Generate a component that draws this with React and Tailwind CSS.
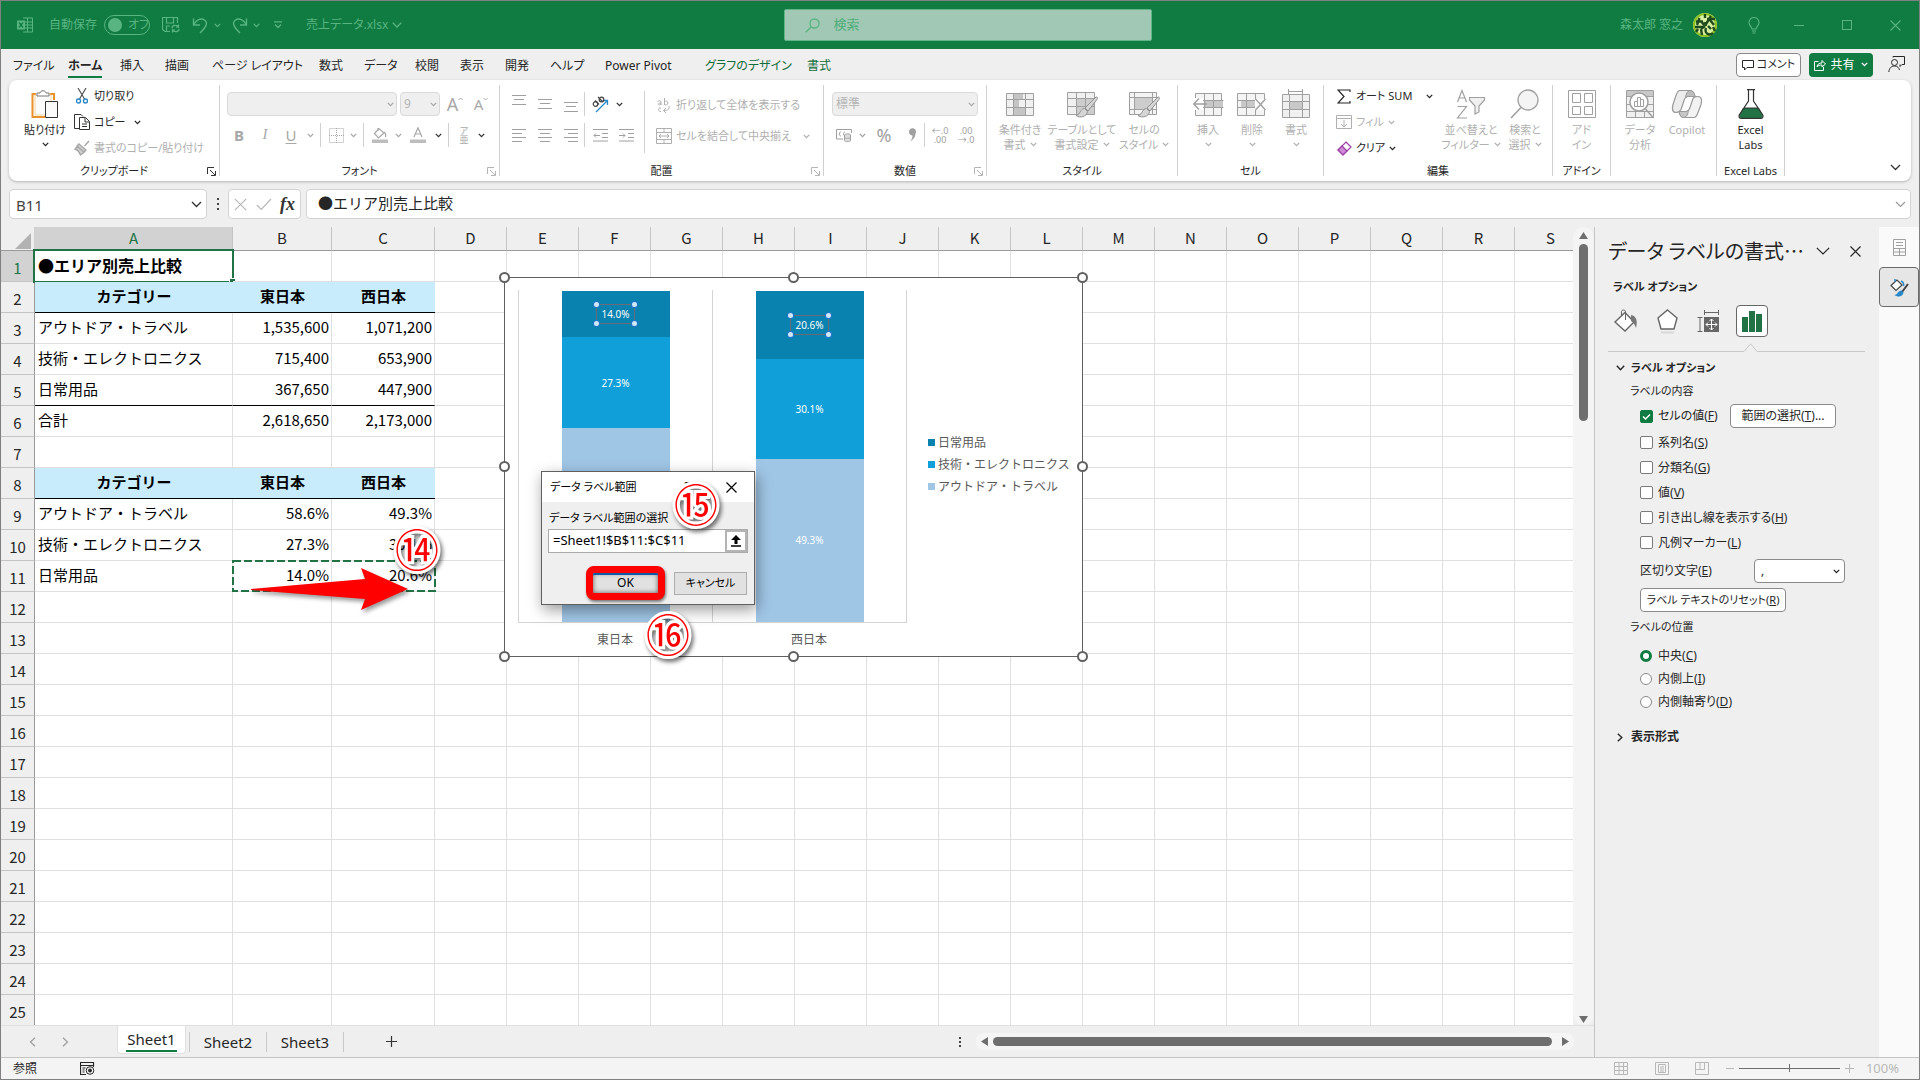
import React, { useState } from "react";
import clsx from "clsx";

const tabs = [
  { name: "ファイル", width: "w-[55px]" },
  { name: "ホーム", width: "w-[52px]", active: true },
  { name: "挿入", width: "w-[45px]" },
  { name: "描画", width: "w-[47px]" },
  { name: "ページ レイアウト", width: "w-[107px]" },
  { name: "数式", width: "w-[45px]" },
  { name: "データ", width: "w-[51px]" },
  { name: "校閲", width: "w-[45px]" },
  { name: "表示", width: "w-[45px]" },
  { name: "開発", width: "w-[45px]" },
  { name: "ヘルプ", width: "w-[55px]" },
  { name: "Power Pivot", width: "w-[100px]" },
  { name: "グラフのデザイン", width: "w-[102px]", green: true },
  { name: "書式", width: "w-[45px]", green: true },
];

const columns = "ABCDEFGHIJKLMNOPQRS".split("");

const cells = {
  1: ["●エリア別売上比較"],
  2: ["カテゴリー", "東日本", "西日本"],
  3: ["アウトドア・トラベル", "1,535,600", "1,071,200"],
  4: ["技術・エレクトロニクス", "715,400", "653,900"],
  5: ["日常用品", "367,650", "447,900"],
  6: ["合計", "2,618,650", "2,173,000"],
  8: ["カテゴリー", "東日本", "西日本"],
  9: ["アウトドア・トラベル", "58.6%", "49.3%"],
  10: ["技術・エレクトロニクス", "27.3%", "30.1%"],
  11: ["日常用品", "14.0%", "20.6%"],
};

const series = [
  { name: "日常用品", color: "#0a82b0" },
  { name: "技術・エレクトロニクス", color: "#109fd9" },
  { name: "アウトドア・トラベル", color: "#a0c6e6" },
];

const bars = [
  { label: "東日本", values: [14.0, 27.3, 58.6] },
  { label: "西日本", values: [20.6, 30.1, 49.3] },
];

/* ---------- small building blocks ---------- */

function Svg({ w = 16, h = w, box, className, children }) {
  return (
    <svg
      width={w}
      height={h}
      viewBox={box || `0 0 ${w} ${h}`}
      fill="none"
      stroke="currentColor"
      aria-hidden="true"
      className={clsx("shrink-0", className)}
    >
      {children}
    </svg>
  );
}

function Caret({ className }) {
  return (
    <Svg w={7} h={5} className={className}>
      <path d="M.8 .9l2.7 2.7L6.200 .9" strokeWidth="1.3" />
    </Svg>
  );
}

function CaretButton({ label, className }) {
  return (
    <button aria-label={label} className={clsx("flex h-6 w-3 items-center justify-center", className)}>
      <Caret />
    </button>
  );
}

function Slot({ label, width = "w-[26px]", className, children }) {
  return (
    <button aria-label={label} className={clsx("flex h-6 items-center justify-center", width, className)}>
      {children}
    </button>
  );
}

function Sep({ className = "mx-1" }) {
  return <span className={clsx("h-6 w-px bg-[#d0d0d0]", className)} />;
}

function Combo({ label, value, className }) {
  return (
    <span className={clsx("relative flex", className)}>
      <select
        aria-label={label}
        disabled
        className="h-6 w-full appearance-none rounded border border-[#dadada] bg-[#efefef] px-[3px] text-xs text-[#b4b4b4]"
      >
        <option>{value}</option>
      </select>
      <Caret className="pointer-events-none absolute top-[10px] right-[3px] text-[#a8a8a8]" />
    </span>
  );
}

function Group({ name, width, launcher, dim, children }) {
  return (
    <section className={clsx("flex shrink-0", width)}>
      <div className="flex min-w-0 flex-1 flex-col">
        <div className="h-[81px]">{children}</div>
        <div className="relative flex h-5 items-center justify-center text-[11px] whitespace-nowrap text-[#262626]">
          {name}
          {launcher && (
            <button
              aria-label={`${name}の設定`}
              className={clsx("absolute right-[3px] bottom-[5px]", dim ? "text-[#b4b4b4]" : "text-[#333]")}
            >
              <Svg w={9}>
                <path d="M.5 7V.5H7M3 3l5 5M8.500 4v4.500H4" />
              </Svg>
            </button>
          )}
        </div>
      </div>
      <span className="my-[5px] w-px bg-[#d0d0d0]" />
    </section>
  );
}

function BigButton({ icon, lines, width, caret, dark }) {
  return (
    <button
      className={clsx(
        "flex flex-col items-center self-start pt-[9px] text-[11px] whitespace-nowrap",
        width,
        dark ? "text-[#262626]" : "text-[#b0b0b0]"
      )}
    >
      <span className="mb-[3px] flex h-[30px] items-center">{icon}</span>
      {lines.map((line, i) => (
        <span key={line} className="flex h-[15px] items-center gap-1 leading-[15px]">
          {line}
          {caret && lines.length === 2 && i === 1 && <Caret />}
        </span>
      ))}
      {caret && lines.length === 1 && (
        <span className="flex h-[15px] items-center">
          <Caret />
        </span>
      )}
    </button>
  );
}

function ListButton({ icon, text, caret, dim }) {
  return (
    <button
      className={clsx(
        "flex h-[26px] items-center gap-1 text-[11px] whitespace-nowrap",
        dim ? "text-[#b0b0b0]" : "text-[#262626]"
      )}
    >
      <span className="flex w-4 justify-center">{icon}</span>
      {text}
      {caret && <Caret className={caret} />}
    </button>
  );
}

/* ---------- ribbon icons ---------- */

const PasteIcon = () => (
  <Svg w={28} h={30}>
    <path d="M5 5H1.500v23H14M19 5h4v6" stroke="#e8912d" strokeWidth="2" />
    <path d="M4 6h16v20H4z" fill="#fbfbfb" stroke="#f6d59b" />
    <path d="M6 7V4h3c.5-3 5.500-3 6 0h3v3z" fill="#fff" stroke="#777" />
    <path d="M14.500 12.500h12v16h-12z" fill="#fafafa" stroke="#333" />
  </Svg>
);

const CutIcon = () => (
  <Svg w={12} h={16}>
    <path d="M2 0l6.500 11M10 0L3.500 11" stroke="#555" strokeWidth="1.200" />
    <circle cx="2.500" cy="13" r="2" stroke="#2b88c8" strokeWidth="1.400" />
    <circle cx="9.500" cy="13" r="2" stroke="#2b88c8" strokeWidth="1.400" />
  </Svg>
);

const CopyIcon = () => (
  <Svg w={16}>
    <path d="M5 14.500H.5v-14H7l2 2M5.500 3.500h6l4 4v8h-10zM11 4v4h4M8 10h5M8 12.500h5" stroke="#333" />
  </Svg>
);

const BrushIcon = () => (
  <Svg w={16}>
    <path d="M15 1l-4.500 5M5 4l7 6-2 2-7-6zM3.500 6L1 9c2 .5 4 2.500 5.500 6l4-3" fill="#cfcfcf" stroke="#a6a6a6" strokeWidth="1.300" />
  </Svg>
);

const LinesIcon = ({ rows }) => (
  <Svg w={14}>
    {rows.map(([x1, x2], i) => (
      <path key={i} d={`M${x1} ${1.5 + i * 4}H${x2}`} />
    ))}
  </Svg>
);

const VAlignIcon = ({ top }) => (
  <Svg w={14} h={24}>
    <path d={`M0 ${top + 0.5}h14M2 ${top + 4.5}h10M0 ${top + 9.5}h14`} />
  </Svg>
);

const IndentIcon = ({ flip }) => (
  <Svg w={15} h={14}>
    <path d="M0 1.500h15M9 5.500h6M9 9.500h6M0 13h15" />
    {flip ? <path d="M0 7.500h6M4 5.500l2 2-2 2" /> : <path d="M7 7.500H1M3 5.500l-2 2 2 2" />}
  </Svg>
);

const GridIcon = ({ children }) => (
  <Svg w={28} h={26} className="text-[#a0a0a0]">
    <path d="M.5 2.500h27v22H.5z" fill="#f0f0f0" />
    {children}
    <path d="M.5 8.500h27M.5 16.500h27M7.500 2.500v22M19.500 2.500v22" />
  </Svg>
);

const Paintbrush = () => (
  <path
    d="M29 7L18 18l3 3L30 9.500c1-1.500 0-3-1-2.500zM17.500 18.500c-4 0-4 6-8.500 7 4 3 11 1 11.500-4z"
    fill="#d6d6d6"
    stroke="#909090"
  />
);

const CondIcon = () => (
  <GridIcon>
    <path d="M8 3h9v5H8zM8 9h5v7H8zM8 17h11v7H8z" fill="#c4c4c4" stroke="none" />
  </GridIcon>
);

const TableStyleIcon = () => (
  <Svg w={31} h={29} className="text-[#a0a0a0]">
    <path d="M.5 2.500h27v22H.5z" fill="#f0f0f0" />
    <path d="M9 9h18v15H9z" fill="#cdcdcd" stroke="none" />
    <path d="M.5 8.500h27M.5 16.500h27M9.500 2.500v22M18.500 2.500v22" />
    <Paintbrush />
  </Svg>
);

const CellStyleIcon = () => (
  <Svg w={31} h={29} className="text-[#a0a0a0]">
    <path d="M.5 2.500h27v22H.5z" fill="#f4f4f4" />
    <path d="M5 8h18v11H5z" fill="#cdcdcd" stroke="none" />
    <path d="M.5 7.500h27M.5 19.500h27M5.500 2.500v22M23.500 2.500v22" />
    <Paintbrush />
  </Svg>
);

const InsertIcon = () => (
  <Svg w={31} h={26} className="text-[#a0a0a0]">
    <path d="M2.500 2.500h26v22h-26z" fill="#f4f4f4" />
    <path d="M11 9h19v8H11z" fill="#c8c8c8" stroke="none" />
    <path d="M2.500 9.500h28M2.500 16.500h28M11.500 2.500v22M20.500 2.500v22" />
    <path d="M0 7h10v12H0z" fill="#fff" stroke="none" />
    <path d="M14 13H1M6 7.500L.8 13 6 18.500" strokeWidth="1.400" />
  </Svg>
);

const DeleteIcon = () => (
  <Svg w={30} h={26} className="text-[#a0a0a0]">
    <path d="M.5 2.500h27v22H.5z" fill="#f4f4f4" />
    <path d="M4 9h14v8H4z" fill="#c8c8c8" stroke="none" />
    <path d="M.5 9.500h27M.5 16.500h27M9.500 2.500v22M18.500 2.500v22" />
    <path d="M18 8h12v11H18z" fill="#fff" stroke="none" />
    <path d="M18.500 8l10 11M28.500 8l-10 11" strokeWidth="1.400" />
  </Svg>
);

const FormatIcon = () => (
  <Svg w={28} h={30} className="text-[#a0a0a0]">
    <path d="M6.500 0v5M20.500 0v5M6 2.500h15" />
    <path d="M.5 5.500h27v23H.5z" fill="#f0f0f0" />
    <path d="M7 13h13v7H7z" fill="#c8c8c8" stroke="none" />
    <path d="M.5 12.500h27M.5 20.500h27M7.500 5.500v23M20.500 5.500v23" />
  </Svg>
);

const SortIcon = () => (
  <Svg w={30} className="text-[#a0a0a0]">
    <path d="M1.500 13L6 1.500 10.500 13M3 9h6M1.500 17.500h9L1.500 29h9.500" strokeWidth="1.200" />
    <path d="M13.500 8.500h15v2.500l-5.500 6v6l-4 2V17l-5.500-6z" fill="#f0f0f0" strokeWidth="1.200" />
  </Svg>
);

const FindIcon = () => (
  <Svg w={30} className="text-[#a0a0a0]">
    <circle cx="18" cy="11" r="10" fill="#f4f4f4" strokeWidth="1.300" />
    <path d="M11 18.500L1 29" strokeWidth="1.600" />
  </Svg>
);

const AddinIcon = () => (
  <Svg w={28} h={30} className="text-[#a0a0a0]">
    <path d="M.5 1.500h27v27H.5zM4.500 4.500h8v9h-8zM16.500 4.500h8v9h-8zM4.500 17.500h8v8h-8zM16.500 17.500h8v8h-8z" />
  </Svg>
);

const AnalyzeIcon = () => (
  <Svg w={28} h={30} className="text-[#a0a0a0]">
    <path d="M.5 1.500h27v27H.5z" fill="#f0f0f0" />
    <path d="M1 2h26v5H1z" fill="#c8c8c8" stroke="none" />
    <path d="M.5 7.500h27M.5 15.500h27M.5 22.500h27M9.500 22v6M18.500 22v6" />
    <circle cx="13" cy="13" r="9" fill="#fff" strokeWidth="1.500" />
    <path d="M8.500 12.500h3v5h-3zM11.500 8.500h3v9h-3zM14.500 10.500h3v7h-3z" />
    <path d="M19.500 20l8 9" strokeWidth="1.500" />
  </Svg>
);

const CopilotIcon = () => (
  <Svg w={32} h={30} className="text-[#9a9a9a]">
    <path d="M9 1.500h10c3 0 4 2 5 6H17c-2 0-3 1-4 4l-3 9c-1 2-2 3-5 3-4 0-4-4-3-8l3-9c1-3 2-5 4-5z" fill="#ececec" strokeWidth="1.200" />
    <path d="M19 1.500c3 0 4 2 5 6H17c-1 0-2 .5-2.500 1.500C15 5 16 2 19 1.500z" fill="#bdbdbd" />
    <path d="M23 28.500H13c-3 0-4-2-5-6h7c2 0 3-1 4-4l3-9c1-2 2-2 5-2 4 0 4 4 3 8l-3 8c-1 3-2 5-4 5z" fill="#f2f2f2" strokeWidth="1.200" />
    <path d="M13 28.500c-3 0-4-2-5-6h7c1 0 2-.5 2.500-1.500C17 25 16 28 13 28.500z" fill="#c6c6c6" />
  </Svg>
);

const FlaskIcon = () => (
  <Svg w={26} h={30}>
    <path d="M5 19h16l3.500 7c.8 2-.2 3-2 3h-19c-1.800 0-2.800-1-2-3z" fill="#217346" stroke="none" />
    <path d="M9 .7h8M10.500 1v11L1.200 26c-.7 2 .3 3.300 2 3.300h19.600c1.700 0 2.700-1.300 2-3.300L15.500 12V1M5.500 19h15" stroke="#333" strokeWidth="1.200" />
  </Svg>
);

/* ---------- title bar ---------- */

function TitleBar() {
  return (
    <header className="flex h-12 shrink-0 items-center bg-[#107c41] text-[#58b481]">
      <div className="flex flex-1 items-center pl-4 whitespace-nowrap">
        <Svg w={16}>
          <path d="M6 1h9.500v14H6M6 5h9M6 8h9M6 11h9M10.500 1v14" />
          <path d="M0 3.500h8v9H0z" fill="currentColor" stroke="none" />
          <path d="M2 5.500l4 5M6 5.500l-4 5" stroke="#107c41" strokeWidth="1.300" />
        </Svg>
        <span id="autosave" className="ml-4 w-[55px]">自動保存</span>
        <button
          role="switch"
          aria-checked="false"
          aria-labelledby="autosave"
          className="flex h-5 w-[46px] items-center gap-1.5 rounded-full border border-current pl-[3px]"
        >
          <span className="size-3.5 rounded-full bg-current" />
          オフ
        </button>
        <button aria-label="上書き保存" className="ml-3">
          <Svg w={18}>
            <path d="M8 15.500H3l-2.500-2V1.500h15V7M4.500 2v5h7V2M4.500 15v-5H8M10 12c0-3 5-3.500 6.500-1V8.500M16.500 11H14M17 13c0 3-5 3.500-6.500 1v2.500M10.500 14H13" strokeWidth="1.200" />
          </Svg>
        </button>
        <button aria-label="元に戻す" className="ml-3">
          <Svg w={17}>
            <path d="M1.500 1.500V8H8M1.500 8C4 3 9 .5 12.500 3c4 3 1.500 7-4.500 13" strokeWidth="1.400" />
          </Svg>
        </button>
        <CaretButton label="元に戻す履歴" className="ml-0.5" />
        <button aria-label="やり直し" className="ml-2">
          <Svg w={17}>
            <path d="M15.500 1.500V8H9M15.500 8C13 3 8 .5 4.500 3c-4 3-1.500 7 4.500 13" strokeWidth="1.400" />
          </Svg>
        </button>
        <CaretButton label="やり直し履歴" className="ml-0.5" />
        <button aria-label="クイック アクセスのカスタマイズ" className="ml-3">
          <Svg w={8} h={8}>
            <path d="M0 .8h8M1 3.500l3 3 3-3" strokeWidth="1.300" />
          </Svg>
        </button>
        <button className="ml-6 flex items-center gap-1 text-xs">
          売上データ.xlsx
          <Svg w={10} h={6}>
            <path d="M.8 .8L5 5 9.200 .8" strokeWidth="1.300" />
          </Svg>
        </button>
      </div>
      <div className="ml-[17px] flex h-8 w-[368px] items-center gap-3.5 rounded-[2px] border border-[#5fb586] bg-[#a0c8b4] pl-5">
        <Svg w={15}>
          <circle cx="9.500" cy="5.500" r="4.500" strokeWidth="1.300" />
          <path d="M6.300 8.700L.8 14.200" strokeWidth="1.300" />
        </Svg>
        <input
          aria-label="検索"
          placeholder="検索"
          className="min-w-0 flex-1 bg-transparent text-[13px] outline-none placeholder:text-[#4fae79]"
        />
      </div>
      <div className="flex flex-1 items-center justify-end pr-[18px]">
        <span>森太郎 窓之</span>
        <Svg w={24} className="mr-[31px] ml-2.5">
          <circle cx="12" cy="12" r="12" fill="#d9f0a0" stroke="none" />
          <circle cx="12" cy="12" r="11" stroke="#8cc21f" strokeWidth="2" />
          <path d="M3 8.500h7M6.500 5L4 12M8 8l3 4M12 1v4M2 14h9M14 6h8M18 3l-5 8M17 7l4 5M12 13l-4 3M5 16l-2 3M8 16l1 6M13 15c-2 6 4 8 7 5M15 13l3 3M20 14l2 4M12 9l1 4" stroke="#1e4a1e" strokeWidth="2.400" />
        </Svg>
        <button aria-label="ヒント" className="mr-[34px]">
          <Svg w={12} h={17}>
            <path d="M4 12c0-2-3-3-3-6.500a5 5 0 0110 0C11 9 8 10 8 12zM4 14h4M4.500 16h3" strokeWidth="1.100" />
          </Svg>
        </button>
        <button aria-label="最小化" className="mr-[38px] h-px w-[10px] bg-current" />
        <button aria-label="最大化" className="mr-[38px] h-[10px] w-[10px] border border-current" />
        <button aria-label="閉じる">
          <Svg w={11}>
            <path d="M.5 .5l10 10M10.500 .5l-10 10" strokeWidth="1.100" />
          </Svg>
        </button>
      </div>
    </header>
  );
}

function TabRow() {
  return (
    <div className="flex h-[31px] shrink-0 items-center pl-3 text-xs text-[#262626]">
      <nav className="flex pt-1">
        {tabs.map((tab) => (
          <button key={tab.name} className={clsx("shrink-0 text-left whitespace-nowrap", tab.width)}>
            <span
              className={clsx(
                "inline-block border-b-2 leading-5",
                tab.active ? "border-[#107c41] font-bold" : "border-transparent",
                tab.green && "text-[#0f6b39]"
              )}
            >
              {tab.name}
            </span>
          </button>
        ))}
      </nav>
      <div className="ml-auto flex items-center pr-3.5">
        <button className="flex h-6 w-[65px] items-center justify-center gap-[3px] rounded border border-[#8a8a8a] bg-white text-[11px]">
          <Svg w={12}>
            <path d="M.5 1.500h11v7H5L2.500 11V8.500h-2z" />
          </Svg>
          コメント
        </button>
        <button className="ml-2 flex h-6 w-16 items-center justify-center gap-1 rounded bg-[#107c41] text-white">
          <Svg w={12}>
            <path d="M4.500 2.500h-4v9h9V8M3 8c.5-3 2-4 5-4V1.500l3.500 3.500L8 8V6C5.500 6 4 6.500 3 8z" />
          </Svg>
          共有
          <Caret className="ml-0.5" />
        </button>
        <button aria-label="フィードバック" className="ml-[15px]">
          <Svg w={17}>
            <path d="M5 1.500V.5h11.500v8H14l-2 2v-2" />
            <circle cx="6.500" cy="6.500" r="3" />
            <path d="M.8 16c.5-4 2.500-6 5.700-6 3 0 4.500 2 5 4" />
          </Svg>
        </button>
      </div>
    </div>
  );
}

/* ---------- ribbon ---------- */

function Ribbon() {
  return (
    <div className="mr-2 ml-2 flex h-[101px] shrink-0 overflow-hidden rounded-lg bg-white shadow-[0_1px_3px_rgba(0,0,0,0.25)]">
      <Group name="クリップボード" width="w-[211px]" launcher>
        <div className="flex pl-2.5">
          <BigButton icon={<PasteIcon />} lines={["貼り付け"]} width="w-[52px]" caret dark />
          <div className="flex flex-col pt-[3px] pl-[3px]">
            <ListButton icon={<CutIcon />} text="切り取り" />
            <ListButton icon={<CopyIcon />} text="コピー" caret="ml-1" />
            <ListButton icon={<BrushIcon />} text="書式のコピー/貼り付け" dim />
          </div>
        </div>
      </Group>

      <Group name="フォント" width="w-[280px]" launcher dim>
        <div className="flex flex-col gap-[7px] pt-3 pl-1.5 text-[#a8a8a8]">
          <div className="flex items-center pl-px">
            <Combo label="フォント名" value="" className="mr-[3px] w-[170px]" />
            <Combo label="フォント サイズ" value="9" className="w-10" />
            <Slot label="フォント サイズの拡大" className="ml-0.5 text-lg">
              A
              <Svg w={5} h={4} className="mb-2.5"><path d="M.5 3l2-2 2 2" /></Svg>
            </Slot>
            <Slot label="フォント サイズの縮小" className="text-[15px]">
              A
              <Svg w={5} h={4} className="mb-2.5"><path d="M.5 1l2 2 2-2" /></Svg>
            </Slot>
          </div>
          <div className="flex items-center">
            <Slot label="太字" className="text-[15px] font-bold">B</Slot>
            <Slot label="斜体" className="font-['Liberation_Serif',serif] text-[15px] italic">I</Slot>
            <Slot label="下線" className="text-[15px] underline underline-offset-2">U</Slot>
            <CaretButton label="下線の種類" />
            <Sep />
            <Slot label="罫線" width="w-[22px]">
              <Svg w={15}>
                <path d="M.5 .5h14v14H.5zM7.500 0v15M0 7.500h15" strokeDasharray="1 1" />
              </Svg>
            </Slot>
            <CaretButton label="罫線の種類" />
            <Sep />
            <Slot label="塗りつぶし" width="w-6">
              <Svg w={16}>
                <path d="M7 1.500L2.500 6.500l4 4.500L12 6zM6 4V1M12 5c1.500 1 2 3 1.500 5" strokeWidth="1.200" />
                <path d="M0 12.500h16v3.500H0z" fill="#bdbdbd" stroke="none" />
              </Svg>
            </Slot>
            <CaretButton label="塗りつぶしの色" />
            <Slot label="フォントの色" width="w-7">
              <Svg w={16}>
                <path d="M4 10L8 .8 12 10M5.500 7h5" strokeWidth="1.200" />
                <path d="M0 12.500h16v3.500H0z" fill="#bdbdbd" stroke="none" />
              </Svg>
            </Slot>
            <CaretButton label="フォントの色の選択" className="text-[#333]" />
            <Sep />
            <Slot label="ふりがな" width="w-[22px]" className="flex-col text-[9px] leading-[9px]">
              <span>ア</span>
              <span>亜</span>
            </Slot>
            <CaretButton label="ふりがなの設定" className="text-[#333]" />
          </div>
        </div>
      </Group>

      <Group name="配置" width="w-[324px]" launcher dim>
        <div className="flex text-[#a0a0a0]">
          <div className="flex flex-col gap-[7px] pt-3 pl-1.5">
            <div className="flex">
              <Slot label="上揃え"><VAlignIcon top={3} /></Slot>
              <Slot label="上下中央揃え"><VAlignIcon top={7} /></Slot>
              <Slot label="下揃え"><VAlignIcon top={10} /></Slot>
              <Sep className="mr-0.5" />
              <Slot label="方向">
                <Svg w={17}>
                  <path d="M4 16L15.500 4.500M11 4.500h4.500V9" stroke="#2b88c8" strokeWidth="1.300" />
                  <circle cx="3.500" cy="8" r="2.300" stroke="#444" strokeWidth="1.200" />
                  <path d="M3 4.500l4 4M6 1l5 5" stroke="#444" strokeWidth="1.200" />
                  <circle cx="9.500" cy="3.500" r="2.300" stroke="#444" strokeWidth="1.200" />
                </Svg>
              </Slot>
              <CaretButton label="方向の選択" className="text-[#333]" />
            </div>
            <div className="flex">
              <Slot label="左揃え"><LinesIcon rows={[[0, 14], [0, 10], [0, 14], [0, 10]]} /></Slot>
              <Slot label="中央揃え"><LinesIcon rows={[[0, 14], [2, 12], [0, 14], [2, 12]]} /></Slot>
              <Slot label="右揃え"><LinesIcon rows={[[0, 14], [4, 14], [0, 14], [4, 14]]} /></Slot>
              <Sep className="mr-0.5" />
              <Slot label="インデントを減らす"><IndentIcon /></Slot>
              <Slot label="インデントを増やす"><IndentIcon flip /></Slot>
            </div>
          </div>
          <span className="mt-[11px] ml-[5px] h-[62px] w-px bg-[#d0d0d0]" />
          <div className="flex flex-col gap-[5px] pt-3 pl-[11px]">
            <ListButton
              dim
              icon={
                <Svg w={16}>
                  <path d="M2 5c0-2 3-2 3 0v3M5 6c-3-.5-3.500 2-1.500 2L5 7M8.500 1v7M8.500 5c1-1.500 3.500-1 3.500 1s-2.500 2.500-3.500 1M5 11c-3-1-3.500 4 0 3.500M13 9v1.500c0 2-1 3-5 3M10 11l-2.500 2.500L10 16" />
                </Svg>
              }
              text="折り返して全体を表示する"
            />
            <ListButton
              dim
              icon={
                <Svg w={16}>
                  <path d="M.5 .5h15v15H.5zM.5 4.500h15M.5 11.500h15M8 .5v4M8 11.500v4M3 8h10M5 6L3 8l2 2M11 6l2 2-2 2" />
                </Svg>
              }
              text="セルを結合して中央揃え"
              caret="ml-2"
            />
          </div>
        </div>
      </Group>

      <Group name="数値" width="w-[163px]" launcher dim>
        <div className="flex flex-col gap-[7px] pt-3 pl-2 text-[#a0a0a0]">
          <Combo label="表示形式" value="標準" className="w-[146px]" />
          <div className="flex items-center">
            <Slot label="通貨表示形式" width="w-6">
              <Svg w={16}>
                <path d="M7 12H.5V2.500h15V6M5 5c-2-.5-2.500 4 0 4M9 9c-2 0-2-4 0-4" />
                <path d="M8.500 8c0-1.500 6-1.500 6 0v5.500c0 1.500-6 1.500-6 0zM8.500 10.500c1 1 5 1 6 0" fill="#dcdcdc" />
              </Svg>
            </Slot>
            <CaretButton label="通貨の選択" />
            <Slot label="パーセント スタイル" width="w-8" className="text-lg">%</Slot>
            <Slot label="桁区切りスタイル" width="w-6">
              <Svg w={9} h={14}>
                <path d="M1 4a3.500 3.500 0 116.500 1.500C7.500 9 5 12 2 13.500 4 11 4.500 9 4.500 7.500 2.500 7.500 1 6 1 4z" fill="currentColor" stroke="none" />
              </Svg>
            </Slot>
            <Sep className="mr-0.5" />
            <Slot label="小数点以下の表示桁数を増やす" className="flex-col text-[9px] leading-[9px]">
              <span>←.0</span>
              <span>.00</span>
            </Slot>
            <Slot label="小数点以下の表示桁数を減らす" className="flex-col text-[9px] leading-[9px]">
              <span>.00</span>
              <span>→.0</span>
            </Slot>
          </div>
        </div>
      </Group>

      <Group name="スタイル" width="w-[191px]">
        <div className="flex pl-0.5">
          <BigButton icon={<CondIcon />} lines={["条件付き", "書式"]} width="w-[62px]" caret />
          <BigButton icon={<TableStyleIcon />} lines={["テーブルとして", "書式設定"]} width="w-[62px]" caret />
          <BigButton icon={<CellStyleIcon />} lines={["セルの", "スタイル"]} width="w-[62px]" caret />
        </div>
      </Group>

      <Group name="セル" width="w-[146px]">
        <div className="flex pl-2">
          <BigButton icon={<InsertIcon />} lines={["挿入"]} width="w-11" caret />
          <BigButton icon={<DeleteIcon />} lines={["削除"]} width="w-11" caret />
          <BigButton icon={<FormatIcon />} lines={["書式"]} width="w-11" caret />
        </div>
      </Group>

      <Group name="編集" width="w-[229px]">
        <div className="flex">
          <div className="flex w-[119px] flex-col pt-[3px] pl-3">
            <ListButton
              icon={
                <Svg w={14} h={15}>
                  <path d="M13 3V1H1l6 6.500L1 14h12v-2" strokeWidth="1.200" />
                </Svg>
              }
              text="オート SUM"
              caret="ml-2.5"
            />
            <ListButton
              dim
              icon={
                <Svg w={16} h={14}>
                  <path d="M.5 .5h15v13H.5zM.5 3.500h15M8 5v7M5 9l3 3 3-3" />
                </Svg>
              }
              text="フィル"
              caret="ml-0"
            />
            <ListButton
              icon={
                <Svg w={15} h={15}>
                  <path d="M9 1l5 5-8 8-5-5z" fill="#fff" stroke="#9b3fa5" strokeWidth="1.200" />
                  <path d="M5 5l5 5-4 4-5-5z" fill="#cf8bd6" stroke="#9b3fa5" strokeWidth="1.200" />
                </Svg>
              }
              text="クリア"
              caret="ml-0"
            />
          </div>
          <BigButton icon={<SortIcon />} lines={["並べ替えと", "フィルター"]} width="w-[56px]" caret />
          <BigButton icon={<FindIcon />} lines={["検索と", "選択"]} width="w-[52px]" caret />
        </div>
      </Group>

      <Group name="アドイン" width="w-[58px]">
        <BigButton icon={<AddinIcon />} lines={["アド", "イン"]} width="w-full" />
      </Group>

      <Group width="w-[106px]">
        <div className="flex pl-1">
          <BigButton icon={<AnalyzeIcon />} lines={["データ", "分析"]} width="w-[50px]" />
          <BigButton icon={<CopilotIcon />} lines={["Copilot"]} width="w-11" />
        </div>
      </Group>

      <Group name="Excel Labs" width="w-[68px]">
        <BigButton icon={<FlaskIcon />} lines={["Excel", "Labs"]} width="w-full" dark />
      </Group>

      <button aria-label="リボンを折りたたむ" className="mr-2.5 mb-2.5 ml-auto self-end text-[#333]">
        <Svg w={11} h={7}>
          <path d="M1 1l4.500 4.500L10 1" strokeWidth="1.300" />
        </Svg>
      </button>
    </div>
  );
}

function FormulaBar() {
  return (
    <div className="mx-2 mt-2 flex h-[30px] shrink-0 font-['Noto_Sans_CJK_JP',sans-serif] text-[15px] [font-feature-settings:normal]">
      <div className="flex w-[198px] items-center rounded border border-[#d4d4d4] bg-white pr-1">
        <input
          aria-label="名前ボックス"
          defaultValue="B11"
          className="min-w-0 flex-1 pt-0.5 pl-1.5 font-['Noto_Sans',sans-serif] text-[#444] outline-none"
        />
        <Svg w={11} h={7} className="text-[#333]">
          <path d="M1 1l4.500 4.500L10 1" strokeWidth="1.300" />
        </Svg>
      </div>
      <span className="flex w-[21px] flex-col items-center justify-center gap-[3px]">
        <i className="size-0.5 bg-[#444]" />
        <i className="size-0.5 bg-[#444]" />
        <i className="size-0.5 bg-[#444]" />
      </span>
      <div className="mr-[5px] flex w-[73px] items-center justify-between rounded border border-[#d4d4d4] bg-white px-[5px] text-[#b8b8b8]">
        <button aria-label="キャンセル">
          <Svg w={13}>
            <path d="M.8 .8l11.400 11.400M12.200 .8L.8 12.200" strokeWidth="1.200" />
          </Svg>
        </button>
        <button aria-label="入力">
          <Svg w={16} h={13}>
            <path d="M.8 7l4.500 4.500L15 1" strokeWidth="1.200" />
          </Svg>
        </button>
        <button
          aria-label="関数の挿入"
          className="font-['Liberation_Serif',serif] text-lg leading-none font-bold text-[#333] italic"
        >
          fx
        </button>
      </div>
      <div className="flex flex-1 items-center rounded border border-[#d4d4d4] bg-white pr-1">
        <input
          aria-label="数式バー"
          defaultValue="●エリア別売上比較"
          className="min-w-0 flex-1 pb-0.5 pl-[11px] text-[#262626] outline-none"
        />
        <Svg w={11} h={7} className="text-[#999]">
          <path d="M1 1l4.500 4.500L10 1" strokeWidth="1.200" />
        </Svg>
      </div>
    </div>
  );
}

/* ---------- worksheet ---------- */

function Cell({ row, col }) {
  const text = cells[row]?.[col];
  const inTable = col < 3 && row <= 11;
  const head = inTable && (row === 2 || row === 8);
  const ruled = head || (inTable && row === 5);
  return (
    <td
      className={clsx(
        "relative h-[31px] overflow-visible border-b p-0 px-[3px] pb-0.5 whitespace-nowrap",
        ruled ? "border-b-black" : "border-b-[#e0e0e0]",
        head ? "bg-[#c9ecfc] text-center font-bold" : "border-r border-r-[#e0e0e0]",
        !head && col > 0 && "pr-0.5 text-right",
        row === 1 && "text-base leading-5 font-bold"
      )}
    >
      {text}
      {row === 1 && col === 0 && (
        <span className="absolute -top-0.5 -right-0.5 -bottom-0.5 -left-0.5 border-2 border-[#217346]">
          <span className="absolute -right-[3px] -bottom-[3px] size-[6px] border-t border-l border-white bg-[#217346]" />
        </span>
      )}
    </td>
  );
}

function Grid() {
  return (
    <table className="w-max table-fixed border-separate border-spacing-0 bg-white font-['Noto_Sans_CJK_JP',sans-serif] text-[15px] leading-5 [font-feature-settings:normal]">
      <colgroup>
        <col className="w-[34px]" />
        <col className="w-[198px]" />
        <col className="w-[99px]" />
        <col className="w-[103px]" />
        {columns.slice(3).map((c) => (
          <col key={c} className="w-[72px]" />
        ))}
      </colgroup>
      <thead>
        <tr>
          <th className="h-6 border-r border-b border-r-[#d0d0d0] border-b-[#9a9a9a] bg-[#efefef] p-0">
            <Svg w={16} className="mt-1 ml-[14px]">
              <path d="M16 0v16H0z" fill="#b2b2b2" stroke="none" />
            </Svg>
          </th>
          {columns.map((c) => (
            <th
              key={c}
              className={clsx(
                "h-6 border-r border-b border-r-[#c4c4c4] border-b-[#9a9a9a] p-0 pb-0.5 font-normal",
                c === "A" ? "bg-[#d2d2d2] text-[#217346]" : "bg-[#efefef] text-[#262626]"
              )}
            >
              {c}
            </th>
          ))}
        </tr>
      </thead>
      <tbody>
        {Array.from({ length: 25 }, (_, i) => i + 1).map((row) => (
          <tr key={row}>
            <th
              className={clsx(
                "h-[31px] border-r border-b border-r-[#9a9a9a] border-b-[#c4c4c4] p-0 pt-1 font-normal",
                row === 1 ? "bg-[#d2d2d2] text-[#217346]" : "bg-[#efefef] text-[#262626]"
              )}
            >
              {row}
            </th>
            {columns.map((c, col) => (
              <Cell key={c} row={row} col={col} />
            ))}
          </tr>
        ))}
      </tbody>
    </table>
  );
}

function SelectedLabel({ children }) {
  return (
    <span className="relative border border-[#6a6a78] px-1 py-px">
      {children}
      <i className="absolute -top-[3px] -left-[3px] size-[5px] rounded-full bg-[#cfe8fb] ring-1 ring-[#2277c8]" />
      <i className="absolute -top-[3px] -right-[3px] size-[5px] rounded-full bg-[#cfe8fb] ring-1 ring-[#2277c8]" />
      <i className="absolute -bottom-[3px] -left-[3px] size-[5px] rounded-full bg-[#cfe8fb] ring-1 ring-[#2277c8]" />
      <i className="absolute -right-[3px] -bottom-[3px] size-[5px] rounded-full bg-[#cfe8fb] ring-1 ring-[#2277c8]" />
    </span>
  );
}

const handles = [
  "-left-1.5 -top-1.5",
  "left-1/2 -ml-1.5 -top-1.5",
  "-right-1.5 -top-1.5",
  "-left-1.5 top-1/2 -mt-1.5",
  "-right-1.5 top-1/2 -mt-1.5",
  "-left-1.5 -bottom-1.5",
  "left-1/2 -ml-1.5 -bottom-1.5",
  "-right-1.5 -bottom-1.5",
];

function Chart() {
  return (
    <figure className="absolute top-[50px] left-[503px] h-[380px] w-[579px] border border-[#606060] bg-white font-['Noto_Sans_CJK_JP',sans-serif] text-[#595959] [font-feature-settings:normal]">
      <div className="flex h-full items-center pl-[13px]">
        <div className="mt-3 flex flex-col self-start">
          <div className="flex h-[333px] border-b border-l border-[#d4d4d4]">
            {bars.map((bar) => (
              <div key={bar.label} className="flex w-[194px] justify-center border-r border-[#d4d4d4] pt-px">
                <div className="flex h-[331px] w-[108px] flex-col">
                  {bar.values.map((v, i) => (
                    <div
                      key={i}
                      className="flex items-center justify-center font-['Noto_Sans',sans-serif] text-[10px] leading-4 text-white"
                      style={{ height: `${v}%`, backgroundColor: series[i].color }}
                    >
                      {i === 0 ? <SelectedLabel>{v.toFixed(1)}%</SelectedLabel> : `${v.toFixed(1)}%`}
                    </div>
                  ))}
                </div>
              </div>
            ))}
          </div>
          <div className="flex h-[31px] items-center text-xs">
            {bars.map((bar) => (
              <span key={bar.label} className="w-[194px] text-center">{bar.label}</span>
            ))}
          </div>
        </div>
        <ul className="-mt-1.5 ml-[21px] text-xs whitespace-nowrap">
          {series.map((s) => (
            <li key={s.name} className="flex h-[22px] items-center gap-[3px]">
              <i className="size-[7px]" style={{ backgroundColor: s.color }} />
              {s.name}
            </li>
          ))}
        </ul>
      </div>
      {handles.map((pos) => (
        <i key={pos} className={clsx("absolute size-[11px] rounded-full border-2 border-[#606060] bg-white", pos)} />
      ))}
    </figure>
  );
}

function Badge({ children, className }) {
  return (
    <span
      className={clsx(
        "absolute font-['Noto_Sans_CJK_JP',sans-serif] text-[44px] leading-[44px] font-normal text-[#f00] drop-shadow-[2px_3px_2px_rgba(0,0,0,0.55)] [paint-order:stroke_fill] [-webkit-text-stroke:6px_white]",
        className
      )}
    >
      {children}
    </span>
  );
}

function RangeDialog() {
  return (
    <div
      role="dialog"
      aria-label="データ ラベル範囲"
      className="absolute top-[470px] left-[540px] flex h-[134px] w-[214px] flex-col border border-[#606060] bg-[#efefef] text-[11px] text-black shadow-[2px_5px_14px_rgba(0,0,0,0.4)]"
    >
      <div className="flex h-[30px] items-center bg-white pl-2">
        <span className="flex-1">データ ラベル範囲</span>
        <button aria-label="ヘルプ" className="mr-9 text-[13px]">?</button>
        <button aria-label="閉じる" className="mr-[17px]">
          <Svg w={11}>
            <path d="M.5 .5l10 10M10.500 .5l-10 10" strokeWidth="1.200" />
          </Svg>
        </button>
      </div>
      <label htmlFor="range" className="pt-1.5 pl-[7px] leading-5">
        データ ラベル範囲の選択
      </label>
      <div className="mx-1.5 mt-px flex h-6 border border-[#ababab] bg-white">
        <input id="range" defaultValue="=Sheet1!$B$11:$C$11" className="min-w-0 flex-1 pl-1 text-[13px] outline-none" />
        <button aria-label="範囲を選択" className="flex w-[22px] items-center justify-center border-2 border-[#b4b4b4] bg-white">
          <Svg w={10} h={12}>
            <path d="M5 0l5 5H6.500v4h-3V5H0z" fill="#000" stroke="none" />
            <path d="M0 11h10" strokeWidth="1.500" />
          </Svg>
        </button>
      </div>
      <div className="mt-[13px] mr-[7px] flex items-center justify-end gap-[9px]">
        <button className="h-[34px] w-[79px] rounded-lg border-[7px] border-[#f00] bg-[#e1e1e1] text-xs shadow-[1px_2px_3px_rgba(0,0,0,0.5),inset_0_2px_0_#0f5aa8,inset_0_0_5px_rgba(0,0,0,0.6)]">
          OK
        </button>
        <button className="h-[23px] w-[73px] border border-[#adadad] bg-[#e1e1e1]">キャンセル</button>
      </div>
    </div>
  );
}

function SheetTabs() {
  return (
    <div className="flex h-8 shrink-0 items-center border-t border-[#e0e0e0] pr-5 text-[15px] text-[#262626]">
      <button aria-label="前のシート" className="ml-7 text-[#a0a0a0]">
        <Svg w={7} h={10}><path d="M6 .8L1.500 5 6 9.200" strokeWidth="1.300" /></Svg>
      </button>
      <button aria-label="次のシート" className="ml-[26px] text-[#a0a0a0]">
        <Svg w={7} h={10}><path d="M1 .8L5.500 5 1 9.200" strokeWidth="1.300" /></Svg>
      </button>
      <button className="ml-12 h-7 w-[69px] self-start rounded-b border-x border-b border-[#e0e0e0] bg-white">
        <span className="mx-2 block border-b-2 border-[#107c41] leading-[22px]">Sheet1</span>
      </button>
      <span className="ml-[3px] h-5 w-px bg-[#c8c8c8]" />
      <button className="w-[76px]">Sheet2</button>
      <span className="h-5 w-px bg-[#c8c8c8]" />
      <button className="w-[76px]">Sheet3</button>
      <span className="h-5 w-px bg-[#c8c8c8]" />
      <button aria-label="新しいシート" className="ml-[42px] text-[#333]">
        <Svg w={11}><path d="M5.500 0v11M0 5.500h11" strokeWidth="1.200" /></Svg>
      </button>
      <span className="ml-auto flex flex-col gap-0.5">
        <i className="size-0.5 bg-[#444]" />
        <i className="size-0.5 bg-[#444]" />
        <i className="size-0.5 bg-[#444]" />
      </span>
      <div className="ml-[15px] flex h-[17px] w-[598px] items-center rounded-lg bg-[#f5f5f5] px-[5px] text-[#6e6e6e]">
        <Svg w={7} h={9}><path d="M7 0v9L0 4.500z" fill="currentColor" stroke="none" /></Svg>
        <span className="mr-2.5 ml-[5px] h-[9px] flex-1 rounded-full bg-current" />
        <Svg w={7} h={9}><path d="M0 0v9l7-4.500z" fill="currentColor" stroke="none" /></Svg>
      </div>
    </div>
  );
}

function Worksheet() {
  return (
    <div className="flex min-w-0 flex-1 flex-col">
      <div className="flex min-h-0 flex-1">
        <div className="relative mt-2 min-w-0 flex-1 overflow-hidden">
          <Grid />
          <svg className="absolute top-[332px] left-[230px] h-[34px] w-[206px]" aria-hidden="true">
            <rect x="2" y="2" width="202" height="30" fill="none" stroke="#217346" strokeWidth="2" strokeDasharray="8 3" />
          </svg>
          <Chart />
        </div>
        <div className="mt-2 flex w-[21px] flex-col items-center rounded-full bg-[#f4f4f4] pt-[5px] text-[#6e6e6e]">
          <Svg w={9} h={7}><path d="M0 7h9L4.500 0z" fill="currentColor" stroke="none" /></Svg>
          <span className="mt-[5px] h-[177px] w-[9px] rounded-full bg-current" />
          <Svg w={9} h={7} className="mt-auto mb-0.5"><path d="M0 0h9L4.500 7z" fill="currentColor" stroke="none" /></Svg>
        </div>
      </div>
      <SheetTabs />
    </div>
  );
}

/* ---------- format pane ---------- */

function CheckRow({ text, accessKey, checked, onChange, height = "h-[25px]" }) {
  return (
    <label className={clsx("flex items-center gap-[5px]", height)}>
      <span className="relative flex">
        <input
          type="checkbox"
          checked={checked}
          onChange={onChange}
          className="size-[13px] appearance-none rounded-[2px] border border-[#7a7a7a] bg-white checked:border-[#107c41] checked:bg-[#107c41]"
        />
        {checked && (
          <Svg w={13} className="pointer-events-none absolute inset-0 text-white">
            <path d="M3 6.500l2.500 2.500L10 4.500" strokeWidth="1.500" />
          </Svg>
        )}
      </span>
      <span>
        {text}(<u>{accessKey}</u>)
      </span>
    </label>
  );
}

function RadioRow({ text, accessKey, checked, onChange }) {
  return (
    <label className="flex h-[23px] items-center gap-1.5">
      <input
        type="radio"
        name="position"
        checked={checked}
        onChange={onChange}
        className="size-3 appearance-none rounded-full border border-[#8a8a8a] bg-white checked:border-[3px] checked:border-[#107c41]"
      />
      <span>
        {text}(<u>{accessKey}</u>)
      </span>
    </label>
  );
}

const labelOptions = [
  { text: "系列名", key: "S" },
  { text: "分類名", key: "G" },
  { text: "値", key: "V" },
  { text: "引き出し線を表示する", key: "H" },
  { text: "凡例マーカー", key: "L" },
];

const positions = [
  { text: "中央", key: "C" },
  { text: "内側上", key: "I" },
  { text: "内側軸寄り", key: "D" },
];

function FormatPane() {
  const [checked, setChecked] = useState({ F: true });
  const [position, setPosition] = useState("C");

  const toggle = (key) => setChecked((prev) => ({ ...prev, [key]: !prev[key] }));

  return (
    <aside className="mt-2 flex w-[285px] shrink-0 flex-col border-l border-[#c4c4c4] pr-3.5 pl-[13px] text-[#262626]">
      <div className="mt-1.5 flex h-9 items-center">
        <h2 className="flex-1 font-['Noto_Sans_CJK_JP',sans-serif] text-xl whitespace-nowrap">データ ラベルの書式…</h2>
        <button aria-label="作業ウィンドウ オプション">
          <Svg w={14} h={8}><path d="M.8 .8L7 7 13.200 .8" strokeWidth="1.200" /></Svg>
        </button>
        <button aria-label="閉じる" className="mr-1 ml-5">
          <Svg w={11}><path d="M.5 .5l10 10M10.500 .5l-10 10" strokeWidth="1.200" /></Svg>
        </button>
      </div>
      <h3 className="mt-2 h-5 pl-[5px] text-[11px] leading-5 font-bold">ラベル オプション</h3>
      <div className="mt-2 flex h-8 items-center pl-1.5 text-[#666]">
        <button aria-label="塗りつぶしと線">
          <Svg w={24}>
            <path d="M1 13L11 3.500l9 9.500-9 9z" fill="#fff" strokeWidth="1.400" />
            <path d="M7.500 7V2.500c0-2 4-2 4 0V11" />
            <path d="M17 6c5 1 7 5 5 13-1-3-2-5-5-7z" fill="#777" stroke="none" />
          </Svg>
        </button>
        <button aria-label="効果" className="ml-[18px]">
          <Svg w={23} h={26}>
            <path d="M11.500 2L21 10l-3 11H5L2 10z" fill="#fff" strokeWidth="1.400" />
            <path d="M5 24.500h13" stroke="#d8d8d8" strokeWidth="2" />
          </Svg>
        </button>
        <button aria-label="サイズとプロパティ" className="ml-[18px]">
          <Svg w={23} h={22}>
            <path d="M7.500 0v5M21.500 0v5M7.500 2.500h14M.5 7.500h5M.5 21.500h5M3 7.500v14" />
            <path d="M7 7h15v15H7z" fill="#666" stroke="none" />
            <path d="M14.500 9v11M9 14.500h11M12.500 11l2-2 2 2M12.500 18l2 2 2-2M11 12.500l-2 2 2 2M18 12.500l2 2-2 2" stroke="#fff" />
          </Svg>
        </button>
        <button aria-label="ラベル オプション" className="ml-4 flex size-8 items-center justify-center rounded border border-[#666] bg-white">
          <Svg w={20} h={21}>
            <path d="M0 6h6v15H0zM7 0h6v21H7zM14 3h6v18h-6z" fill="#217346" stroke="none" />
          </Svg>
        </button>
      </div>
      <div className="mt-1.5 flex h-[9px] items-end text-[#c8c8c8]">
        <span className="h-px w-[136px] bg-current" />
        <Svg w={13} h={9}><path d="M0 8.500L6.500 .8 13 8.500" /></Svg>
        <span className="h-px flex-1 bg-current" />
      </div>
      <button className="mt-1.5 flex h-5 items-center gap-1.5 pl-2 text-[11px] font-bold">
        <Svg w={9} h={6}><path d="M.8 .8l3.700 4L8.200 .8" strokeWidth="1.400" /></Svg>
        ラベル オプション
      </button>
      <p className="mt-[3px] pl-[22px] text-[11px] leading-5">ラベルの内容</p>
      <div className="mt-[3px] flex flex-col pl-8">
        <div className="flex">
          <CheckRow text="セルの値" accessKey="F" height="h-6" checked={checked.F} onChange={() => toggle("F")} />
          <button className="mr-[29px] ml-auto h-6 w-[106px] rounded border border-[#8a8a8a] bg-white whitespace-nowrap">
            範囲の選択(<u>T</u>)...
          </button>
        </div>
        <div className="mt-0.5 flex flex-col items-start">
          {labelOptions.map((o) => (
            <CheckRow
              key={o.key}
              text={o.text}
              accessKey={o.key}
              checked={!!checked[o.key]}
              onChange={() => toggle(o.key)}
            />
          ))}
        </div>
        <div className="mt-1 flex h-6 items-center">
          <label htmlFor="separator" className="flex-1">
            区切り文字(<u>E</u>)
          </label>
          <span className="relative mr-5 flex w-[91px]">
            <select
              id="separator"
              className="h-6 w-full appearance-none rounded border border-[#8a8a8a] bg-white pl-1.5"
            >
              <option>,</option>
            </select>
            <Caret className="pointer-events-none absolute top-[10px] right-[5px]" />
          </span>
        </div>
        <button className="mt-[5px] h-6 w-[146px] rounded border border-[#8a8a8a] bg-white text-[11px] whitespace-nowrap">
          ラベル テキストのリセット(<u>R</u>)
        </button>
      </div>
      <p className="mt-[5px] pl-[22px] text-[11px] leading-5">ラベルの位置</p>
      <div className="mt-[7px] flex flex-col items-start pl-8">
        {positions.map((p) => (
          <RadioRow
            key={p.key}
            text={p.text}
            accessKey={p.key}
            checked={position === p.key}
            onChange={() => setPosition(p.key)}
          />
        ))}
      </div>
      <button className="mt-3.5 flex h-5 items-center gap-2 pl-[9px] font-bold">
        <Svg w={6} h={9}><path d="M.8 .8l4 3.700-4 3.700" strokeWidth="1.400" /></Svg>
        表示形式
      </button>
    </aside>
  );
}

function SideStrip() {
  return (
    <div className="mt-2 flex w-10 shrink-0 flex-col bg-[#fafafa]">
      <button aria-label="プロパティ" className="flex h-10 items-center justify-center text-[#a0a0a0]">
        <Svg w={13} h={17}>
          <path d="M.5 .5h12v16H.5zM3 3.500h7M3 6.500h7M.5 9.500h12M.5 13h12M6.500 9.500v7" />
        </Svg>
      </button>
      <button
        aria-label="書式設定"
        className="flex h-10 items-center justify-center rounded border border-[#6a6a6a] bg-[#e6e6e6] text-[#444]"
      >
        <Svg w={19}>
          <path d="M1 7.500L7 2l5 5-6 5.500z" fill="#fff" strokeWidth="1.200" />
          <path d="M5 4V1M11 3c2 1 3 3 2.500 5" stroke="#2b88c8" strokeWidth="1.500" />
          <path d="M18 6l-6 8" strokeWidth="2" />
          <path d="M12 12.500c-4-.5-4 4-7.500 4.500 3 2.500 8.500 2 9-2.500z" fill="#2b88c8" stroke="none" />
        </Svg>
      </button>
    </div>
  );
}

function StatusBar() {
  return (
    <footer className="flex h-[22px] shrink-0 items-center border-t border-[#c4c4c4] bg-[#f4f4f4] pr-5 pl-3 text-[#262626]">
      参照
      <button aria-label="マクロの記録" className="ml-[43px]">
        <Svg w={15} h={13}>
          <path d="M6 12.500H.5V.5h13V5M.5 3.500h13M2.500 6h3M2.500 8h2M2.500 10h2" strokeWidth="1.200" />
          <circle cx="10" cy="8.500" r="3.800" />
          <circle cx="10" cy="8.500" r="1.500" fill="currentColor" />
        </Svg>
      </button>
      <div className="ml-auto flex items-center text-[#b8b8b8]">
        <button aria-label="標準">
          <Svg w={14} h={13}><path d="M.5 .5h13v12H.5zM.5 4.500h13M.5 8.500h13M5 .5v12M9.500 .5v12" /></Svg>
        </button>
        <button aria-label="ページ レイアウト" className="ml-[27px]">
          <Svg w={14} h={13}><path d="M.5 .5h13v12H.5zM3.500 2.500h7v8h-7zM5 5h4M5 7h4M5 9h4" /></Svg>
        </button>
        <button aria-label="改ページ プレビュー" className="ml-[26px]">
          <Svg w={14} h={13}><path d="M.5 .5h13v12H.5zM5 .5v7M9.500 .5v7h-9" /></Svg>
        </button>
        <button aria-label="縮小" className="ml-[17px] h-px w-2 bg-current" />
        <input
          type="range"
          aria-label="ズーム"
          defaultValue="50"
          className="mx-[5px] h-3 w-[101px] appearance-none bg-[linear-gradient(#6e6e6e,#6e6e6e)] bg-[length:100%_1px] bg-center bg-no-repeat [&::-webkit-slider-thumb]:h-2 [&::-webkit-slider-thumb]:w-px [&::-webkit-slider-thumb]:appearance-none [&::-webkit-slider-thumb]:bg-[#6e6e6e]"
        />
        <button aria-label="拡大">
          <Svg w={9}><path d="M4.500 0v9M0 4.500h9" /></Svg>
        </button>
        <span className="ml-3 text-[13px]">100%</span>
      </div>
    </footer>
  );
}

export default function App() {
  return (
    <div className="relative flex h-screen min-h-[900px] flex-col overflow-hidden border border-[#808080] bg-[#efefef] font-['Noto_Sans','Noto_Sans_CJK_JP',sans-serif] text-xs [font-feature-settings:'palt']">
      <TitleBar />
      <TabRow />
      <Ribbon />
      <FormulaBar />
      <main className="flex min-h-0 flex-1">
        <Worksheet />
        <FormatPane />
        <SideStrip />
      </main>
      <StatusBar />

      <RangeDialog />

      {/* Step annotations */}
      <svg className="absolute top-[559px] left-[240px] h-[60px] w-[180px] drop-shadow-[2px_3px_2px_rgba(0,0,0,0.4)]" aria-hidden="true">
        <path d="M10 29l114-10-4-11 47 21-47 21 4-11-114-9z" fill="#f00" />
      </svg>
      <Badge className="top-[525px] left-[394px]">⑭</Badge>
      <Badge className="top-[480px] left-[673px]">⑮</Badge>
      <Badge className="top-[610px] left-[645px]">⑯</Badge>
    </div>
  );
}
